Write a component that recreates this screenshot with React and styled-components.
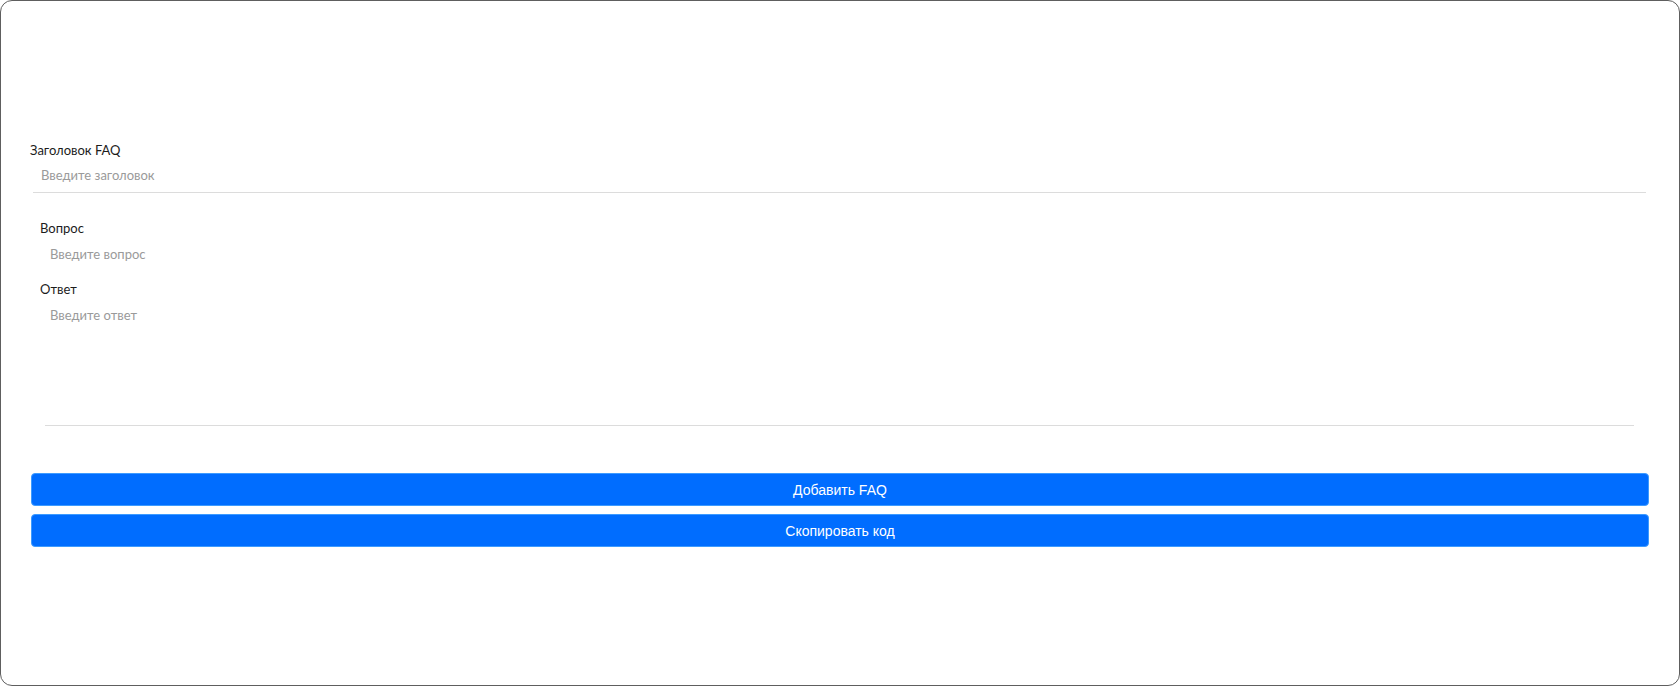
import React, { useState } from 'react';
import styled, { createGlobalStyle } from 'styled-components';

const GlobalStyle = createGlobalStyle`
    html, body {
        margin: 0;
        padding: 0;
        background: #ffffff;
    }
    * {
        box-sizing: border-box;
    }
`;

const Frame = styled.div`
    width: 1680px;
    height: 686px;
    border: 1px solid #5e5e5e;
    border-radius: 12px;
    background: #ffffff;
    padding: 141px 30px 0 29px;
    font-family: Lato, "Noto Sans", sans-serif;
`;

const Label = styled.label`
    display: block;
    font-size: 13px;
    line-height: 16px;
    color: #1c1c1c;
`;

const Field = styled.input`
    display: block;
    width: calc(100% - ${p => p.$inset * 2}px);
    margin: 3px ${p => p.$inset}px 0;
    padding: ${p => p.$inset ? '6px 8px 9px' : '6px 6px'};
    height: ${p => p.$inset ? '32px' : '28px'};
    border: none;
    border-bottom: ${p => p.$underline ? '1px solid #dcdcdc' : 'none'};
    font-family: inherit;
    font-size: 13px;
    line-height: 16px;
    color: #1c1c1c;
    outline: none;
    background: transparent;

    &::placeholder {
        color: #9a9a9a;
    }
`;

const Item = styled.div`
    margin-top: 27px;
    padding: 0 15px 0 10px;
`;

const ItemField = styled(Field)`
    width: calc(100% - 5px);
    margin: 4px 0 0 5px;
    padding: 6px 5px;
`;

const Answer = styled.textarea`
    display: block;
    width: calc(100% - 5px);
    height: 125px;
    margin: 4px 0 0 5px;
    padding: 6px 5px;
    border: none;
    border-bottom: 1px solid #dcdcdc;
    resize: none;
    font-family: inherit;
    font-size: 13px;
    line-height: 16px;
    color: #1c1c1c;
    outline: none;

    &::placeholder {
        color: #9a9a9a;
    }
`;

const Spaced = styled.div`
    margin-top: ${p => p.$top}px;
`;

const Actions = styled.div`
    display: flex;
    flex-direction: column;
    gap: 8px;
    margin-top: 47px;
    padding-left: 1px;
`;

const Button = styled.button`
    height: 33px;
    width: 100%;
    border: 1px solid #3d9bff;
    border-radius: 4px;
    background: #006dff;
    color: #ffffff;
    font-family: "Liberation Sans", Arial, sans-serif;
    font-size: 14px;
    cursor: pointer;
`;

export default function App() {
    const [title, setTitle] = useState('');
    const [question, setQuestion] = useState('');
    const [answer, setAnswer] = useState('');

    return (
        <>
            <GlobalStyle />
            <Frame>
                <Label>Заголовок FAQ</Label>
                <Field
                    $inset={3}
                    $underline
                    placeholder="Введите заголовок"
                    value={title}
                    onChange={e => setTitle(e.target.value)}
                />

                <Item>
                    <Label>Вопрос</Label>
                    <ItemField
                        $inset={0}
                        placeholder="Введите вопрос"
                        value={question}
                        onChange={e => setQuestion(e.target.value)}
                    />
                    <Spaced $top={13}>
                        <Label>Ответ</Label>
                        <Answer
                            placeholder="Введите ответ"
                            value={answer}
                            onChange={e => setAnswer(e.target.value)}
                        />
                    </Spaced>
                </Item>

                <Actions>
                    <Button>Добавить FAQ</Button>
                    <Button>Скопировать код</Button>
                </Actions>
            </Frame>
        </>
    );
}
